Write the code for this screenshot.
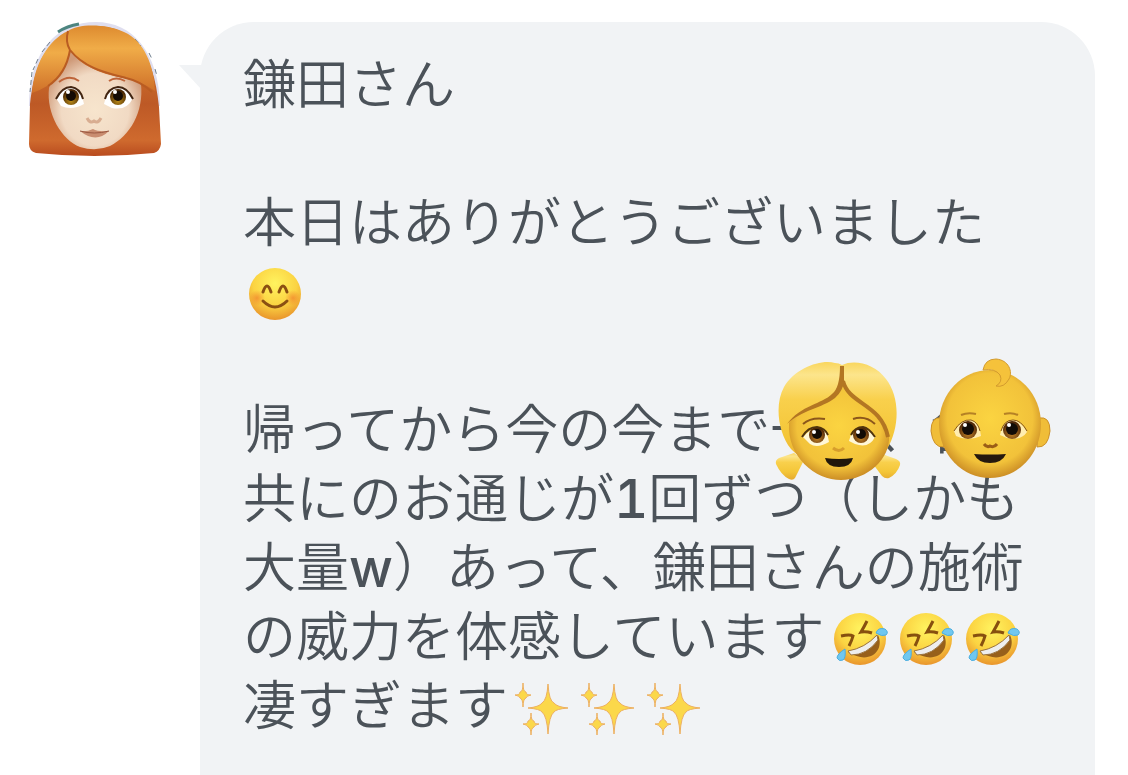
<template>
  <main class="chat">
    <!-- Avatar de quien escribe -->
    <svg class="avatar" viewBox="0 0 134 136" role="img" aria-label="👩‍🦰">
      <defs>
        <linearGradient id="hairTop" x1="0" y1="0" x2="0" y2="1">
          <stop offset="0" stop-color="#dd8a2f" />
          <stop offset="0.35" stop-color="#f0ac48" />
          <stop offset="1" stop-color="#cf7029" />
        </linearGradient>
        <linearGradient id="hairBack" x1="0" y1="0" x2="0" y2="1">
          <stop offset="0" stop-color="#dc8730" />
          <stop offset="0.6" stop-color="#bd5926" />
          <stop offset="0.88" stop-color="#cf6a2e" />
          <stop offset="1" stop-color="#b94c1f" />
        </linearGradient>
        <radialGradient id="skin" cx="0.5" cy="0.6" r="0.56">
          <stop offset="0" stop-color="#f7e5cd" />
          <stop offset="0.65" stop-color="#f1dac4" />
          <stop offset="1" stop-color="#cf9a79" />
        </radialGradient>
        <radialGradient id="iris" cx="0.5" cy="0.75" r="0.65">
          <stop offset="0" stop-color="#b98a18" />
          <stop offset="1" stop-color="#472505" />
        </radialGradient>
      </defs>
      <path d="M1 84C1 28 30 0 68 0C104 0 131 30 132 84Z" fill="#dfdeef" />
      <path d="M30 10Q39 4 51 2" fill="none" stroke="#4d8580" stroke-width="3" />
      <path d="M4 50L2 70M10 37L5 48M22 20L14 30M107 17L113 24M121 31L124 37M127 47L129 54" fill="none" stroke="#6d7d8c" stroke-width="1" stroke-dasharray="5 3" />
      <path d="M39 11C14 24 6 49 2 82L1 122Q1 129 8 131Q66 137 126 131Q132 129 133 122L131 85C126 28 103 4 67 4Q49 4 39 11Z" fill="url(#hairBack)" />
      <path d="M42 28C36 44 24 54 21 66C18 92 34 118 52 125Q68 130 82 124C102 114 116 90 113 62Q106 58 95 56C70 51 52 43 42 28Z" fill="url(#skin)" />
      <path d="M40 9C20 18 6 43 4 71Q37 60 42 28Q38 20 40 9Z" fill="url(#hairTop)" />
      <path d="M40 9C49 2 77 1 96 10C116 19 126 43 127 69Q113 59 93 55C68 49 50 41 42 28Q38 20 40 9Z" fill="url(#hairTop)" />
      <path d="M40 9Q37 20 42 28C56 46 79 51 98 56Q112 59 124 70M42 28Q38 52 20 64" fill="none" stroke="#b95c22" stroke-width="2" />
      <path d="M31 60Q41 52 51 59M81 59Q88 54 97 59" fill="none" stroke="#be6439" stroke-width="2" />
      <path d="M28 76Q34 65 43 65Q53 67 56 82Q44 89 33 84ZM76 82Q79 67 90 65Q99 65 105 76Q99 89 84 86Z" fill="#fff" />
      <circle cx="43" cy="75" r="8" fill="url(#iris)" />
      <circle cx="90" cy="75" r="8" fill="url(#iris)" />
      <circle cx="43" cy="74" r="5" fill="#140b05" />
      <circle cx="90" cy="74" r="5" fill="#140b05" />
      <circle cx="40" cy="70" r="2" fill="#fff" />
      <circle cx="87" cy="70" r="2" fill="#fff" />
      <path d="M28 77Q34 65 43 65Q52 66 55 77M77 77Q80 66 90 65Q99 65 105 77" fill="none" stroke="#422511" stroke-width="2" />
      <path d="M59 96Q62 102 66 99Q70 102 73 96" fill="none" stroke="#d8ad91" stroke-width="3" />
      <path d="M52 109Q59 110 65 107Q70 110 81 109Q68 122 52 109Z" fill="#c98d70" />
      <path d="M52 109Q66 113 81 109" fill="none" stroke="#9a5841" stroke-width="1" />
    </svg>

    <section class="bubble">
      <svg class="tail" viewBox="0 0 22 24" aria-hidden="true">
        <path d="M0 0H22V24Z" fill="#f1f3f5" />
      </svg>
      <p>鎌田さん</p>
      <p>本日はありがとうございました<br />
        <svg class="emoji" viewBox="0 0 66 60" role="img" aria-label="😊">
          <defs>
            <radialGradient id="smile" cx="0.5" cy="0.3" r="0.7">
              <stop offset="0" stop-color="#fff35f" />
              <stop offset="0.6" stop-color="#fbd342" />
              <stop offset="1" stop-color="#e9952c" />
            </radialGradient>
            <radialGradient id="blush">
              <stop offset="0" stop-color="#f28a2f" stop-opacity="0.8" />
              <stop offset="1" stop-color="#f28a2f" stop-opacity="0" />
            </radialGradient>
          </defs>
          <circle cx="32" cy="30" r="26" fill="url(#smile)" />
          <circle cx="14" cy="34" r="8" fill="url(#blush)" />
          <circle cx="50" cy="34" r="8" fill="url(#blush)" />
          <path d="M20 28Q24 16 28 28M36 28Q40 16 44 28" fill="none" stroke="#8b4f12" stroke-width="3" stroke-linecap="round" />
          <path d="M20 37Q32 49 44 37" fill="none" stroke="#8b4f12" stroke-width="3" stroke-linecap="round" />
        </svg>
      </p>
      <p>
        帰ってから今の今まで<span class="name">一人<svg class="face girl" viewBox="0 0 126 126" role="img" aria-label="👧">
          <defs>
            <linearGradient id="girlHair" x1="0" y1="0" x2="0" y2="1">
              <stop offset="0" stop-color="#f9d65e" />
              <stop offset="0.12" stop-color="#fce58c" />
              <stop offset="0.35" stop-color="#f9d04c" />
              <stop offset="0.7" stop-color="#f4c638" />
              <stop offset="1" stop-color="#e5aa2f" />
            </linearGradient>
            <radialGradient id="yellowSkin" cx="0.5" cy="0.45" r="0.56">
              <stop offset="0" stop-color="#fbd441" />
              <stop offset="0.75" stop-color="#f2c23a" />
              <stop offset="1" stop-color="#c98a24" />
            </radialGradient>
            <radialGradient id="brownEye" cx="0.5" cy="0.7" r="0.65">
              <stop offset="0" stop-color="#c38326" />
              <stop offset="1" stop-color="#4b2307" />
            </radialGradient>
          </defs>
          <path d="M19 92L4 97Q0 99 1 103Q6 114 14 118Q18 120 20 117L29 99ZM107 93L121 98Q126 100 125 104Q122 113 114 117Q110 118 107 115L98 103Z" fill="url(#girlHair)" />
          <path d="M67 4C80 -2 100 3 111 18C125 36 125 66 112 88Q95 106 65 108Q33 106 16 88C2 70 0 42 9 26C20 7 46 -2 60 2Q64 2 67 4Z" fill="url(#girlHair)" />
          <path d="M67 20C60 42 26 44 14 62C12 96 40 119 66 119C92 119 116 98 114 74C110 48 76 46 67 20Z" fill="url(#yellowSkin)" />
          <path d="M65 5H69V20Q68 30 60 37C47 47 27 49 12 63C26 44 47 43 57 33Q65 27 65 5Z" fill="#b37623" />
          <path d="M68 20C74 44 106 42 113 76" fill="none" stroke="#b37623" stroke-width="4" />
          <path d="M28 63Q36 56 50 58M78 58Q90 54 100 63" fill="none" stroke="#8c571b" stroke-width="2" />
          <path d="M28 76Q36 66 46 68Q53 71 54 81Q42 88 35 83ZM74 80Q76 69 86 67Q95 68 100 76Q94 88 80 83Z" fill="#fff7d6" />
          <circle cx="42" cy="74" r="8" fill="url(#brownEye)" /><circle cx="86" cy="74" r="8" fill="url(#brownEye)" />
          <circle cx="42" cy="73" r="5" fill="#110b05" /><circle cx="86" cy="73" r="5" fill="#110b05" />
          <circle cx="39" cy="71" r="2" fill="#fff" /><circle cx="83" cy="71" r="2" fill="#fff" />
          <path d="M27 76Q33 66 42 66Q50 67 53 74M76 74Q80 66 88 66Q94 67 100 76" fill="none" stroke="#50340d" stroke-width="2" />
          <path d="M58 87Q64 92 69 87" fill="none" stroke="#d79e2c" stroke-width="3" />
          <path d="M50 97Q64 99 78 97Q76 106 64 106Q52 106 50 97Z" fill="#21170b" />
        </svg></span>、<span class="name">各自<svg class="face baby" viewBox="0 0 126 126" role="img" aria-label="👶">
          <path d="M13 60Q2 58 2 73Q4 90 15 89ZM110 60Q121 58 121 73Q119 90 108 89Z" fill="#f0bd38" stroke="#cc912a" stroke-width="1" />
          <ellipse cx="61" cy="66" rx="51" ry="54" fill="url(#yellowSkin)" />
          <path d="M54 12Q56 1 67 1C80 2 84 14 80 21Q75 30 67 28Q74 24 71 17Q66 10 54 12Z" fill="#f5c23b" stroke="#d39b2e" stroke-width="1" />
          <path d="M32 57Q39 54 47 56M75 56Q83 54 89 57" fill="none" stroke="#b58125" stroke-width="2" />
          <path d="M25 73Q32 61 42 62Q51 65 52 78Q39 84 27 78ZM71 77Q74 63 84 62Q92 63 98 74Q92 83 78 80Z" fill="#ffedb0" />
          <circle cx="39" cy="72" r="9" fill="url(#brownEye)" /><circle cx="83" cy="72" r="9" fill="url(#brownEye)" />
          <circle cx="39" cy="71" r="6" fill="#120c07" /><circle cx="83" cy="71" r="6" fill="#120c07" />
          <circle cx="36" cy="67" r="2" fill="#fff" /><circle cx="80" cy="67" r="2" fill="#fff" />
          <path d="M25 73Q32 61 42 62Q49 64 51 73M72 73Q75 62 84 62Q92 62 98 73" fill="none" stroke="#845418" stroke-width="1" />
          <path d="M55 86Q58 90 61 88Q65 90 68 86" fill="none" stroke="#9b5d16" stroke-width="3" />
          <path d="M45 96Q61 97 77 96Q73 105 61 105Q49 105 45 96Z" fill="#25180e" />
        </svg></span><br />
        共にのお通じが<span class="latin">1</span>回ずつ（しかも<br />
        大量<span class="latin">w</span>）あって、鎌田さんの施術<br />
        の威力を体感しています<svg v-for="n in 3" :key="'laugh' + n" class="emoji" viewBox="0 0 66 60" role="img" aria-label="🤣">
          <circle cx="36" cy="30" r="26" fill="url(#smile)" />
          <path d="M17 27Q26 25 29 27Q28 31 25 37M43 12Q40 18 37 23Q42 22 48 24" fill="none" stroke="#87500f" stroke-width="3" />
          <path d="M24 43Q44 42 54 26C61 41 46 57 24 43Z" fill="#97601b" />
          <path d="M24 42Q41 39 53 26L54 31Q43 46 27 46Z" fill="#eee" stroke="#9a733e" stroke-width="1" />
          <path d="M52 24Q54 18 61 20Q65 23 62 26Q58 28 52 24ZM21 40Q22 49 19 51Q15 53 13 49Q13 45 21 40Z" fill="#70c7ef" stroke="#4baee0" stroke-width="1" />
        </svg><br />
        凄すぎます<svg v-for="n in 3" :key="'spark' + n" class="emoji" viewBox="0 0 66 60" role="img" aria-label="✨">
          <g fill="#fbd84a" stroke="#edb062" stroke-width="1">
            <path d="M40 6Q41 23 46 25Q49 29 60 30Q48 31 46 34Q41 38 40 56Q39 38 34 34Q32 31 20 30Q31 29 34 25Q39 22 40 6Z" />
            <path d="M15 5Q15 14 18 14Q18 17 23 17Q18 18 18 20Q15 21 15 29Q15 21 12 20Q12 18 7 17Q12 17 12 14Q15 14 15 5ZM23 35Q23 43 26 43Q26 46 31 46Q26 47 26 49Q23 50 23 57Q23 50 20 49Q20 47 15 46Q20 46 20 43Q23 43 23 35Z" />
          </g>
        </svg>
      </p>
    </section>
  </main>
</template>

<style>
body {
  margin: 0;
  background: #ffffff;
}
</style>

<style scoped>
.chat {
  display: flex;
  align-items: flex-start;
  gap: 38px;
  height: 100vh;
  overflow: hidden;
  box-sizing: border-box;
  padding: 22px 33px 0 28px;
}

.avatar {
  flex: none;
  width: 134px;
  height: 136px;
}

.bubble {
  position: relative;
  flex: 1;
  min-height: 100%;
  box-sizing: border-box;
  padding: 30px 43px;
  border-radius: 54px 54px 0 0;
  background: #f1f3f5;
  color: #4b5259;
  font-family: Roboto, "Noto Sans CJK JP", sans-serif;
  font-size: 53px;
  font-weight: 350;
  line-height: 69px;
}

.bubble p {
  margin: 0 0 69px;
  white-space: nowrap;
}

.latin {
  font-family: Inter, sans-serif;
  font-weight: 500;
  font-variant-numeric: tabular-nums;
  line-height: 1;
}

/* Pico del globo, a la altura del avatar */
.tail {
  position: absolute;
  top: 43px;
  left: -21px;
  width: 22px;
  height: 24px;
}

.emoji {
  display: inline-block;
  width: 66px;
  height: 60px;
  vertical-align: -13px;
}

.name {
  position: relative;
}

/* La cara tapa el nombre */
.face {
  position: absolute;
  left: 0;
  width: 126px;
  height: 126px;
}

.girl {
  top: -39px;
  left: 5px;
}

.baby {
  top: -42px;
}
</style>
